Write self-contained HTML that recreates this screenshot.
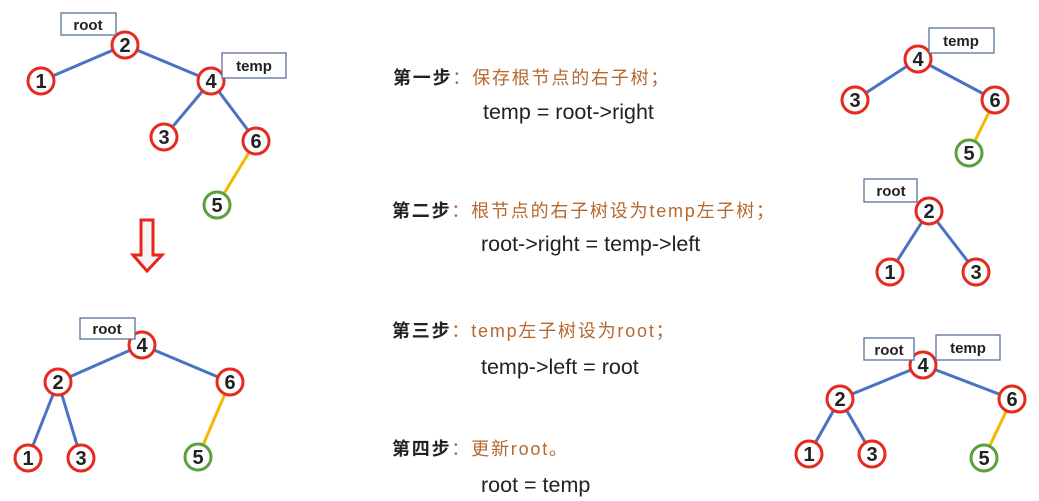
<!DOCTYPE html>
<html><head><meta charset="utf-8"><style>
body{margin:0;width:1039px;height:501px;background:#fff;overflow:hidden;position:relative;font-family:"Liberation Sans","Noto Sans CJK SC",sans-serif}
.s{position:absolute;font-size:18px;font-weight:bold;color:#222;white-space:nowrap;letter-spacing:1.8px;line-height:24px}
.s span{color:#b5682f;font-weight:normal}
.c{position:absolute;font-size:21.5px;color:#222;white-space:nowrap;line-height:26px}
svg text{font-family:"Liberation Sans",sans-serif}
</style></head><body>
<svg width="1039" height="501" style="position:absolute;left:0;top:0">
<g stroke="#4a72c4" stroke-width="3">
<line x1="125" y1="45" x2="41" y2="81"/><line x1="125" y1="45" x2="211" y2="81"/><line x1="211" y1="81" x2="164" y2="137"/><line x1="211" y1="81" x2="256" y2="141"/>
<line x1="142" y1="345" x2="58" y2="382"/><line x1="142" y1="345" x2="230" y2="382"/><line x1="58" y1="382" x2="28" y2="458"/><line x1="58" y1="382" x2="81" y2="458"/>
<line x1="918" y1="59" x2="855" y2="100"/><line x1="918" y1="59" x2="995" y2="100"/>
<line x1="929" y1="211" x2="890" y2="272"/><line x1="929" y1="211" x2="976" y2="272"/>
<line x1="923" y1="365" x2="840" y2="399"/><line x1="923" y1="365" x2="1012" y2="399"/><line x1="840" y1="399" x2="809" y2="454"/><line x1="840" y1="399" x2="872" y2="454"/>
</g>
<g stroke="#f5b800" stroke-width="3">
<line x1="256" y1="141" x2="217" y2="205"/><line x1="230" y1="382" x2="198" y2="457"/><line x1="995" y1="100" x2="969" y2="153"/><line x1="1012" y1="399" x2="984" y2="458"/>
</g>
<g fill="#fff" stroke="#e52a1e" stroke-width="3">
<circle cx="125" cy="45" r="13"/><circle cx="41" cy="81" r="13"/><circle cx="211" cy="81" r="13"/><circle cx="164" cy="137" r="13"/><circle cx="256" cy="141" r="13"/>
<circle cx="142" cy="345" r="13"/><circle cx="58" cy="382" r="13"/><circle cx="230" cy="382" r="13"/><circle cx="28" cy="458" r="13"/><circle cx="81" cy="458" r="13"/>
<circle cx="918" cy="59" r="13"/><circle cx="855" cy="100" r="13"/><circle cx="995" cy="100" r="13"/>
<circle cx="929" cy="211" r="13"/><circle cx="890" cy="272" r="13"/><circle cx="976" cy="272" r="13"/>
<circle cx="923" cy="365" r="13"/><circle cx="840" cy="399" r="13"/><circle cx="1012" cy="399" r="13"/><circle cx="809" cy="454" r="13"/><circle cx="872" cy="454" r="13"/>
</g>
<g fill="#fff" stroke="#5aa03c" stroke-width="3">
<circle cx="217" cy="205" r="13"/><circle cx="198" cy="457" r="13"/><circle cx="969" cy="153" r="13"/><circle cx="984" cy="458" r="13"/>
</g>
<g fill="#fff" stroke="#5a6fa0" stroke-width="1.3">
<rect x="61" y="13" width="55" height="22"/><rect x="222" y="53" width="64" height="25"/>
<rect x="80" y="318" width="55" height="21"/>
<rect x="929" y="28" width="65" height="25"/>
<rect x="864" y="179" width="53" height="23"/>
<rect x="864" y="338" width="50" height="22"/><rect x="936" y="335" width="64" height="25"/>
</g>
<g font-size="20" font-weight="bold" fill="#222" text-anchor="middle">
<text x="125" y="52">2</text><text x="41" y="88">1</text><text x="211" y="88">4</text><text x="164" y="144">3</text><text x="256" y="148">6</text><text x="217" y="212">5</text>
<text x="142" y="352">4</text><text x="58" y="389">2</text><text x="230" y="389">6</text><text x="28" y="465">1</text><text x="81" y="465">3</text><text x="198" y="464">5</text>
<text x="918" y="66">4</text><text x="855" y="107">3</text><text x="995" y="107">6</text><text x="969" y="160">5</text>
<text x="929" y="218">2</text><text x="890" y="279">1</text><text x="976" y="279">3</text>
<text x="923" y="372">4</text><text x="840" y="406">2</text><text x="1012" y="406">6</text><text x="809" y="461">1</text><text x="872" y="461">3</text><text x="984" y="465">5</text>
</g>
<g font-size="15" font-weight="bold" fill="#222" text-anchor="middle">
<text x="88" y="30">root</text><text x="254" y="71">temp</text><text x="107" y="334">root</text>
<text x="961" y="46">temp</text><text x="891" y="196">root</text><text x="889" y="355">root</text><text x="968" y="353">temp</text>
</g>
<path d="M141 220 H153 V255 H162 L147 271 L133 255 H141 Z" fill="#f4f4f4" stroke="#e8261a" stroke-width="3"/>
</svg>
<div class="s" style="left:393px;top:66px">第一步<span>：保存根节点的右子树；</span></div>
<div class="c" style="left:483px;top:99px">temp = root-&gt;right</div>
<div class="s" style="left:392px;top:199px">第二步<span>：根节点的右子树设为temp左子树；</span></div>
<div class="c" style="left:481px;top:231px">root-&gt;right = temp-&gt;left</div>
<div class="s" style="left:392px;top:319px">第三步<span>：temp左子树设为root；</span></div>
<div class="c" style="left:481px;top:354px">temp-&gt;left = root</div>
<div class="s" style="left:392px;top:437px">第四步<span>：更新root。</span></div>
<div class="c" style="left:481px;top:472px">root = temp</div>
</body></html>
